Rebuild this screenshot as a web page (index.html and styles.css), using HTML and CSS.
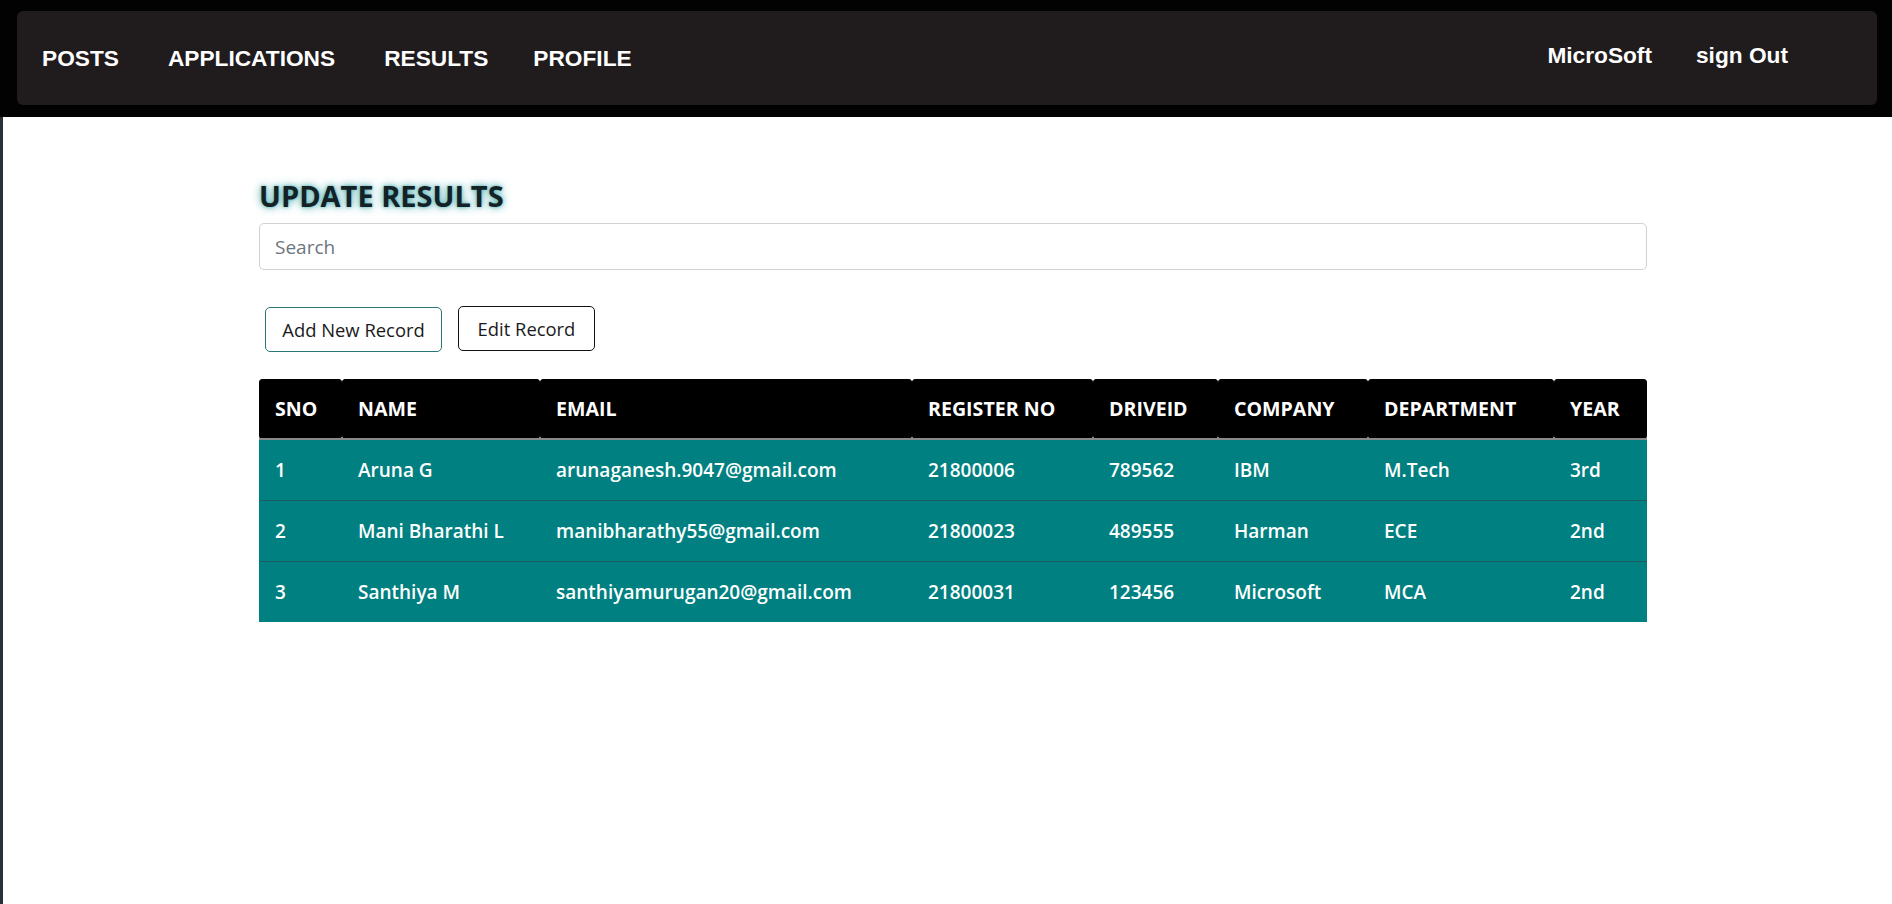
FILE: index.html
```html
<!DOCTYPE html>
<html lang="en">
<head>
<meta charset="utf-8">
<title>Update Results</title>
<link rel="stylesheet" href="styles.css">
</head>
<body>
<header class="topbar">
  <nav class="nav">
    <div class="nav-left">
      <a class="nav-link" href="#">POSTS</a>
      <a class="nav-link" href="#">APPLICATIONS</a>
      <a class="nav-link" href="#">RESULTS</a>
      <a class="nav-link last" href="#">PROFILE</a>
    </div>
    <div class="nav-right">
      <a class="nav-link" href="#">MicroSoft</a>
      <a class="nav-link" href="#">sign Out</a>
    </div>
  </nav>
</header>
<main class="page">
  <section class="content">
    <h1 class="title">UPDATE RESULTS</h1>
    <input class="search" type="text" placeholder="Search">
    <div class="actions">
      <button class="btn btn-add">Add New Record</button>
      <button class="btn btn-edit">Edit Record</button>
    </div>
    <table class="results">
      <colgroup>
        <col class="c1"><col class="c2"><col class="c3"><col class="c4"><col class="c5"><col class="c6"><col class="c7"><col class="c8">
      </colgroup>
      <thead>
        <tr>
          <th>SNO</th><th>NAME</th><th>EMAIL</th><th>REGISTER NO</th><th>DRIVEID</th><th>COMPANY</th><th>DEPARTMENT</th><th>YEAR</th>
        </tr>
      </thead>
      <tbody>
        <tr><td>1</td><td>Aruna G</td><td>arunaganesh.9047@gmail.com</td><td>21800006</td><td>789562</td><td>IBM</td><td>M.Tech</td><td>3rd</td></tr>
        <tr><td>2</td><td>Mani Bharathi L</td><td>manibharathy55@gmail.com</td><td>21800023</td><td>489555</td><td>Harman</td><td>ECE</td><td>2nd</td></tr>
        <tr><td>3</td><td>Santhiya M</td><td>santhiyamurugan20@gmail.com</td><td>21800031</td><td>123456</td><td>Microsoft</td><td>MCA</td><td>2nd</td></tr>
      </tbody>
    </table>
  </section>
</main>
</body>
</html>
```

FILE: styles.css
```css
* { box-sizing: border-box; }
html, body { margin: 0; padding: 0; background: #fff; }
body { font-family: "Open Sans", "Noto Sans", sans-serif; }

.topbar {
  background: #020202;
  padding: 11px 15px 12px 17px;
}
.nav {
  height: 94px;
  background: #201c1d;
  border-radius: 6px;
  display: flex;
  align-items: center;
  justify-content: space-between;
  padding: 0 89px 0 25px;
}
.nav-left { display: flex; align-items: center; gap: 49px; }
.nav-left .last { margin-left: -4px; }
.nav-right { display: flex; align-items: center; gap: 44px; margin-top: -6px; }
.nav-link {
  font-family: "Liberation Sans", Arial, sans-serif;
  font-weight: bold;
  font-size: 22.7px;
  color: #fff;
  text-decoration: none;
}

.page {
  border-left: 3px solid #263238;
  min-height: 787px;
}
.content {
  width: 1388px;
  margin-left: 256px;
  padding-top: 59px;
}
.title {
  margin: 0 0 7px 0;
  font-size: 29px;
  font-weight: 700;
  line-height: 40px;
  color: #142226;
  text-shadow: 0 0 8px #3a9fa3, 0 0 3px #6cc6c6;
}
.search {
  display: block;
  width: 100%;
  height: 47px;
  border: 1px solid #cfd3d6;
  border-radius: 5px;
  padding: 0 15px;
  font-family: inherit;
  font-size: 19px;
  color: #333;
}
.search::placeholder { color: #6c757d; }

.actions {
  display: flex;
  align-items: flex-start;
  gap: 16px;
  margin: 36px 0 27px 6px;
}
.btn {
  font-family: inherit;
  font-size: 18.4px;
  background: #fff;
  color: #1a1a1a;
  border-radius: 5px;
  height: 45px;
  padding: 0;
  cursor: pointer;
}
.btn-add { border: 1px solid #2b7676; width: 177px; margin-top: 1px; }
.btn-edit { border: 1px solid #111; width: 137px; }

.results {
  width: 1388px;
  border-collapse: collapse;
  table-layout: fixed;
}
.c1 { width: 83px; } .c2 { width: 198px; } .c3 { width: 372px; } .c4 { width: 181px; }
.c5 { width: 125px; } .c6 { width: 150px; } .c7 { width: 186px; } .c8 { width: 93px; }

.results thead tr { background: #4a4a4a; }
.results th {
  background: #000;
  color: #fff;
  text-align: left;
  font-size: 19.6px;
  font-weight: 700;
  height: 60px;
  padding: 0 16px;
  border-radius: 4px;
  border-bottom: 2px solid #8a8a8a;
  white-space: nowrap;
}
.results td {
  background: #008080;
  color: #fff;
  font-size: 19px;
  font-weight: 600;
  height: 61px;
  padding: 0 16px;
  border-bottom: 1px solid #1a5e5e;
  white-space: nowrap;
}
.results tbody tr:last-child td { border-bottom: none; }
```
